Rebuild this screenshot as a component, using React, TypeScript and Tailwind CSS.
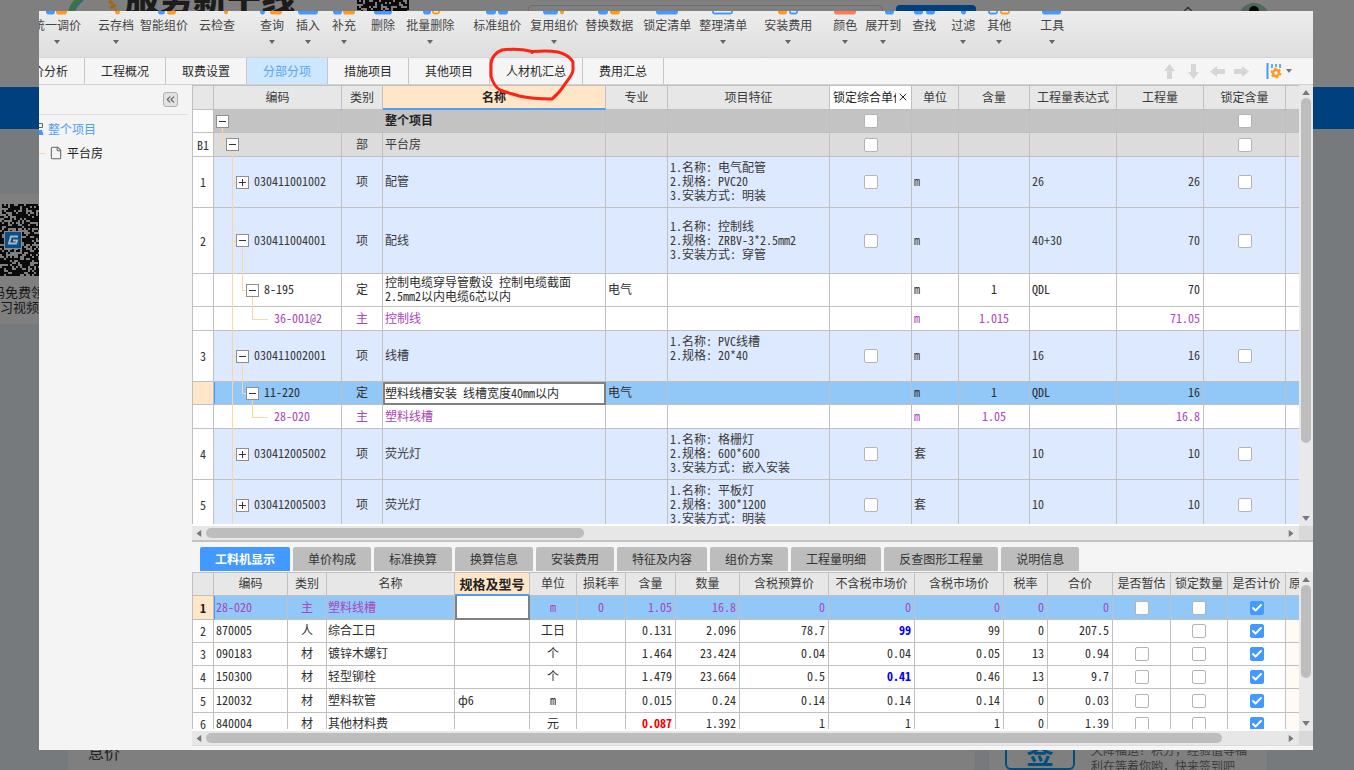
import React, { useState } from "react";
import { Check, ChevronUp, ChevronsLeft, File, X } from "lucide-react";

/* ---------- shared bits ---------- */

function Caret({ className = "" }: { className?: string }) {
  return (
    <svg className={className} width="6" height="4" viewBox="0 0 6 4" aria-hidden="true">
      <path d="M0 0h6L3 4z" fill="currentColor" />
    </svg>
  );
}

function Arrow({ className = "" }: { className?: string }) {
  return (
    <svg className={className} width="15" height="15" viewBox="0 0 15 15" aria-hidden="true">
      <path d="M7.500 0L13 7H10V15H5V7H2z" fill="currentColor" />
    </svg>
  );
}

function Tick({ label, on = false }: { label: string; on?: boolean }) {
  const [checked, setChecked] = useState(on);
  return (
    <span className="mx-auto grid h-3.5 w-3.5 place-items-center">
      <input
        type="checkbox"
        aria-label={label}
        checked={checked}
        onChange={(e) => setChecked(e.target.checked)}
        className="peer col-start-1 row-start-1 h-3.5 w-3.5 appearance-none rounded-[2px] border border-[#b4b4b4] bg-white checked:border-[#4299ff] checked:bg-[#4299ff]"
      />
      <Check
        size={12}
        strokeWidth={4}
        className="pointer-events-none invisible col-start-1 row-start-1 text-white peer-checked:visible"
      />
    </span>
  );
}

function VScroll({ thumb }: { thumb: string }) {
  return (
    <div className="flex w-3.5 shrink-0 flex-col items-center bg-[#e9e9e9] pt-[3px] pb-1">
      <button type="button" aria-label="向上滚动" className="flex h-2 items-center text-[#777780]">
        <Caret className="h-[5px] w-2 rotate-180" />
      </button>
      <div className="flex w-full flex-1 flex-col items-center pt-0.5">
        <div className={"w-2.5 rounded-full bg-[#bdbdbd] " + thumb} />
      </div>
      <button type="button" aria-label="向下滚动" className="flex h-2 items-center text-[#777780]">
        <Caret className="h-[5px] w-2" />
      </button>
    </div>
  );
}

function HScroll({ thumb }: { thumb: string }) {
  return (
    <div className="flex h-3.5 shrink-0">
      <div className="flex flex-1 items-center bg-[#e7e7e7] pr-0.5 pl-[3px]">
        <button type="button" aria-label="向左滚动" className="flex w-[11px] text-[#777780]">
          <Caret className="h-[5px] w-2 rotate-90" />
        </button>
        <div className="flex flex-1">
          <div className={"h-2.5 rounded-full bg-[#bdbdbd] " + thumb} />
        </div>
        <button type="button" aria-label="向右滚动" className="flex w-2.5 text-[#777780]">
          <Caret className="h-[5px] w-2 -rotate-90" />
        </button>
      </div>
      <div className="w-3.5 bg-[#d9d9d9]" />
    </div>
  );
}

/* ---------- toolbar ---------- */

const BLUE = "#4299ff";
const ORANGE = "#ff9a1f";

type Piece = { x: number; w: number; c: string; open?: boolean };
type Tool = { name: string; gap: string; menu?: boolean; icon: Piece[] };

const tools: Tool[] = [
  { name: "统一调价", gap: "-ml-1.5", menu: true, icon: [{ x: 4, w: 9, c: BLUE }, { x: 14, w: 11, c: ORANGE }] },
  { name: "云存档", gap: "ml-[17px]", menu: true, icon: [{ x: 14, w: 5, c: ORANGE }] },
  { name: "智能组价", gap: "ml-1.5", icon: [{ x: 9, w: 7, c: BLUE }, { x: 18, w: 9, c: ORANGE }] },
  { name: "云检查", gap: "ml-[11px]", icon: [{ x: 22, w: 4, c: ORANGE }] },
  { name: "查询", gap: "ml-[25px]", menu: true, icon: [{ x: 3, w: 5, c: BLUE }, { x: 13, w: 12, c: ORANGE }] },
  { name: "插入", gap: "ml-3", menu: true, icon: [{ x: 5, w: 20, c: BLUE }] },
  { name: "补充", gap: "ml-3", menu: true, icon: [{ x: 4, w: 9, c: BLUE }, { x: 14, w: 12, c: ORANGE }] },
  { name: "删除", gap: "ml-[15px]", icon: [{ x: 6, w: 18, c: BLUE }] },
  { name: "批量删除", gap: "ml-[11px]", menu: true, icon: [{ x: 8, w: 8, c: BLUE }, { x: 17, w: 8, c: ORANGE, open: true }] },
  { name: "标准组价", gap: "ml-[19px]", icon: [{ x: 4, w: 10, c: BLUE }, { x: 16, w: 10, c: BLUE }] },
  { name: "复用组价", gap: "ml-[9px]", menu: true, icon: [{ x: 4, w: 15, c: BLUE }, { x: 21, w: 4, c: ORANGE }] },
  { name: "替换数据", gap: "ml-[7px]", icon: [{ x: 4, w: 10, c: BLUE }, { x: 16, w: 10, c: ORANGE }] },
  { name: "锁定清单", gap: "ml-2.5", icon: [{ x: 4, w: 22, c: BLUE }] },
  { name: "整理清单", gap: "ml-2", menu: true, icon: [{ x: 4, w: 21, c: BLUE, open: true }] },
  { name: "安装费用", gap: "ml-[17px]", menu: true, icon: [{ x: 5, w: 9, c: ORANGE }, { x: 16, w: 9, c: BLUE, open: true }] },
  { name: "颜色", gap: "ml-[21px]", menu: true, icon: [{ x: 4, w: 22, c: "#ff7a50" }] },
  { name: "展开到", gap: "ml-2", menu: true, icon: [{ x: 17, w: 9, c: BLUE }] },
  { name: "查找", gap: "ml-[11px]", icon: [{ x: 5, w: 9, c: BLUE }, { x: 17, w: 9, c: BLUE }] },
  { name: "过滤", gap: "ml-[15px]", menu: true, icon: [{ x: 13, w: 5, c: BLUE }] },
  { name: "其他", gap: "ml-3", menu: true, icon: [{ x: 4, w: 10, c: BLUE, open: true }, { x: 16, w: 10, c: ORANGE, open: true }] },
  { name: "工具", gap: "ml-[29px]", menu: true, icon: [{ x: 5, w: 19, c: BLUE }] },
];

function Toolbar() {
  return (
    <div className="flex h-[46px] shrink-0 bg-linear-to-b from-[#ededed] to-[#dedede] text-[#454545]">
      {tools.map((t) => (
        <button key={t.name} type="button" className={"flex shrink-0 flex-col items-center whitespace-nowrap " + t.gap}>
          <svg width="30" height="4" viewBox="0 0 30 4" className="-mx-3" aria-hidden="true">
            {t.icon.map((p) =>
              p.open ? (
                <path key={p.x} d={`M${p.x + 1} 0v1q0 1.5 1.5 1.5h${p.w - 5}q1.5 0 1.5-1.5v-1`} fill="none" stroke={p.c} strokeWidth="1.8" />
              ) : (
                <path key={p.x} d={`M${p.x} 0h${p.w}q0 3.4-2 3.4h${-(p.w - 4)}q-2 0-2-3.4z`} fill={p.c} />
              )
            )}
          </svg>
          <span className="mt-0.5 h-4 text-xs leading-4">{t.name}</span>
          {t.menu && <Caret className="mt-[7px] text-[#666]" />}
        </button>
      ))}
    </div>
  );
}

/* ---------- page tabs ---------- */

const pageTabs = ["价分析", "工程概况", "取费设置", "分部分项", "措施项目", "其他项目", "人材机汇总", "费用汇总"];

function PageTabs() {
  return (
    <div className="flex h-7 shrink-0 border-y border-[#d3d3d3] bg-[#f5f5f5] text-xs">
      {pageTabs.map((t, i) => (
        <button
          key={t}
          type="button"
          className={
            "relative shrink-0 border-r border-[#c6c6c6] whitespace-nowrap " +
            (i === 0 ? "-ml-[7px] pr-4 pl-0 " : "px-4 ") +
            (t === "分部分项" ? "bg-[#cce7ff] text-[#5aa5f8]" : "text-[#2b2b2b]")
          }
        >
          {t}
          {t === "人材机汇总" && (
            <svg
              className="pointer-events-none absolute -top-3 -left-1 z-20"
              width="92"
              height="56"
              viewBox="0 0 92 56"
              fill="none"
              stroke="#ff2314"
              strokeWidth="3"
              strokeLinecap="round"
              strokeLinejoin="round"
              aria-hidden="true"
            >
              <path d="M46 5.500C36 3 24 3 16 4C10 6 5 12 5 18V30C6 34 8 40 14 44C21 47 28 48 33 50C42 52 48 53 66 53C72 48 76 43 79 38C84 31 87 28 87 24V16C84 11 80 8 72 6C62 4 52 5 46 5.500V6.500" />
            </svg>
          )}
        </button>
      ))}
      <div className="flex flex-1 items-center justify-end gap-[9px] pr-[21px] text-[#d6d6d6]">
        <button type="button" aria-label="上移"><Arrow /></button>
        <button type="button" aria-label="下移"><Arrow className="rotate-180" /></button>
        <button type="button" aria-label="左移"><Arrow className="-rotate-90" /></button>
        <button type="button" aria-label="右移"><Arrow className="rotate-90" /></button>
        <button type="button" aria-label="列设置" className="ml-2 flex items-center gap-1">
          <svg width="16" height="16" viewBox="0 0 16 16" aria-hidden="true">
            <path d="M1.500 0v16" stroke={BLUE} strokeWidth="2" />
            <path d="M6 1v4M10 1v3M14 1v4" stroke={BLUE} strokeWidth="1.6" />
            <circle cx="10" cy="10" r="3" fill="none" stroke={ORANGE} strokeWidth="2.4" />
            <circle cx="10" cy="10" r="4.6" fill="none" stroke={ORANGE} strokeWidth="1.6" strokeDasharray="2.4 2.4" />
          </svg>
          <Caret className="text-[#777]" />
        </button>
      </div>
    </div>
  );
}

/* ---------- bill of quantities ---------- */

type Level = 0 | 1 | 2 | 3 | 4;
type BillRow = {
  no: string;
  level: Level;
  sign?: "+" | "-";
  code?: string;
  kind?: string;
  name: string;
  major?: string;
  spec?: string;
  lock?: boolean;
  unit?: string;
  rate?: string;
  expr?: string;
  qty?: string;
  height: string;
  tone: string;
  active?: boolean;
};

const ITEM = "bg-[#dde9fe] text-[#3a3a3a]";
const PLAIN = "bg-white text-[#2e2e2e]";
const MAT = "bg-white text-[#a946bb]";

const bill: BillRow[] = [
  { no: "", level: 0, sign: "-", name: "整个项目", lock: true, height: "h-[23px]", tone: "bg-[#c3c3c3] font-bold text-[#222]" },
  { no: "B1", level: 1, sign: "-", kind: "部", name: "平台房", lock: true, height: "h-6", tone: "bg-[#dcdcdc] text-[#3a3a3a]" },
  { no: "1", level: 2, sign: "+", code: "030411001002", kind: "项", name: "配管", spec: "1.名称: 电气配管\n2.规格: PVC20\n3.安装方式: 明装", lock: true, unit: "m", expr: "26", qty: "26", height: "h-[51px]", tone: ITEM },
  { no: "2", level: 2, sign: "-", code: "030411004001", kind: "项", name: "配线", spec: "1.名称: 控制线\n2.规格: ZRBV-3*2.5mm2\n3.安装方式: 穿管", lock: true, unit: "m", expr: "40+30", qty: "70", height: "h-[66px]", tone: ITEM },
  { no: "", level: 3, sign: "-", code: "8-195", kind: "定", name: "控制电缆穿导管敷设 控制电缆截面\n2.5mm2以内电缆6芯以内", major: "电气", unit: "m", rate: "1", expr: "QDL", qty: "70", height: "h-[33px]", tone: PLAIN },
  { no: "", level: 4, code: "36-001@2", kind: "主", name: "控制线", unit: "m", rate: "1.015", qty: "71.05", height: "h-6", tone: MAT },
  { no: "3", level: 2, sign: "-", code: "030411002001", kind: "项", name: "线槽", spec: "1.名称: PVC线槽\n2.规格: 20*40\n\n", lock: true, unit: "m", expr: "16", qty: "16", height: "h-[51px]", tone: ITEM },
  { no: "", level: 3, sign: "-", code: "11-220", kind: "定", name: "塑料线槽安装 线槽宽度40mm以内", major: "电气", unit: "m", rate: "1", expr: "QDL", qty: "16", height: "h-[23px]", tone: "bg-[#92c8f8] text-[#2e2e2e]", active: true },
  { no: "", level: 4, code: "28-020", kind: "主", name: "塑料线槽", unit: "m", rate: "1.05", qty: "16.8", height: "h-6", tone: MAT },
  { no: "4", level: 2, sign: "+", code: "030412005002", kind: "项", name: "荧光灯", spec: "1.名称: 格栅灯\n2.规格: 600*600\n3.安装方式: 嵌入安装", lock: true, unit: "套", expr: "10", qty: "10", height: "h-[51px]", tone: ITEM },
  { no: "5", level: 2, sign: "+", code: "030412005003", kind: "项", name: "荧光灯", spec: "1.名称: 平板灯\n2.规格: 300*1200\n3.安装方式: 明装", lock: true, unit: "套", expr: "10", qty: "10", height: "h-[51px]", tone: ITEM },
];

const indent = ["pl-0.5", "pl-3", "pl-[22px]", "pl-8", "pl-[60px]"];
const above = ["", "left-2", "left-[18px]", "left-7", "left-[38px]"];
const below = ["left-2", "left-[18px]", "left-7", "left-[38px]", ""];
const guide = "absolute bg-[#fbd6a4]";

const line = "border-r border-b border-[#c0c0c0]";
const cell = line + " pb-0.5";
const headTone = "border-[#c0c0c0] bg-[#e7e7e7] pb-0.5 font-normal text-[#3a3a3a] whitespace-nowrap overflow-hidden";
const head = "border-t border-r border-b " + headTone;
const headActive = "border-t border-r border-b-2 border-[#c0c0c0] border-b-[#4f9ef5] bg-[#ffe6c8] font-bold text-[#222] whitespace-nowrap";

function TreeCell({ row }: { row: BillRow }) {
  const l = row.level;
  return (
    <td className={line + " relative " + indent[l]}>
      {l >= 2 && <span className={guide + " top-0 -bottom-px left-[18px] w-px"} />}
      {l === 1 && <span className={guide + " top-0 left-2 h-1/2 w-px"} />}
      {l === 3 && <span className={guide + " top-0 left-7 h-1/2 w-px"} />}
      {l === 4 && <span className={guide + " top-0 left-[38px] h-1/2 w-px"} />}
      {l > 0 && <span className={guide + " top-1/2 h-px " + above[l] + (l === 4 ? " w-4" : " w-1.5")} />}
      {(l < 2 || (row.sign === "-" && l < 4)) && (
        <span className={guide + " top-1/2 -bottom-px w-px " + below[l]} />
      )}
      {row.active && <span className="absolute inset-y-0 left-0 w-px bg-[#4299ff]" />}
      <span className="relative flex items-center gap-[5px]">
        {row.sign && (
          <button
            type="button"
            aria-label={row.sign === "+" ? "展开" : "折叠"}
            className="grid h-[13px] w-[13px] shrink-0 place-items-center border border-[#8e8e8e] bg-white"
          >
            <svg width="7" height="7" viewBox="0 0 7 7" aria-hidden="true">
              <path d={row.sign === "+" ? "M0 3.5h7M3.5 0v7" : "M0 3.5h7"} stroke="#333" strokeWidth="1" />
            </svg>
          </button>
        )}
        <span className="pb-0.5">{row.code}</span>
      </span>
    </td>
  );
}

function BillTable() {
  return (
    <table className="w-full table-fixed border-separate border-spacing-0 border-l border-[#c0c0c0] text-xs leading-[14px]">
      <colgroup>
        <col className="w-[21px]" />
        <col className="w-[128px]" />
        <col className="w-[41px]" />
        <col className="w-[223px]" />
        <col className="w-[62px]" />
        <col className="w-[162px]" />
        <col className="w-[82px]" />
        <col className="w-[47px]" />
        <col className="w-[71px]" />
        <col className="w-[87px]" />
        <col className="w-[87px]" />
        <col className="w-[82px]" />
        <col />
      </colgroup>
      <thead>
        <tr className="h-[25px]">
          <th className={head} />
          <th className={head}>编码</th>
          <th className={head}>类别</th>
          <th className={headActive}>名称</th>
          <th className={head}>专业</th>
          <th className={head}>项目特征</th>
          <th className="border-t border-r border-b border-[#c0c0c0] bg-white pr-0.5 pb-0.5 pl-[3px] font-normal text-[#222]">
            <span className="flex items-center justify-between">
              <span className="w-[63px] overflow-hidden text-left whitespace-nowrap">锁定综合单价</span>
              <button type="button" aria-label="关闭"><X size={12} strokeWidth={2} /></button>
            </span>
          </th>
          <th className={head}>单位</th>
          <th className={head}>含量</th>
          <th className={head}>工程量表达式</th>
          <th className={head}>工程量</th>
          <th className={head}>锁定含量</th>
          <th className={"border-t border-b " + headTone} />
        </tr>
      </thead>
      <tbody>
        {bill.map((r, i) => (
          <tr key={i} className={r.height + " " + r.tone}>
            <td className={line + " text-center font-normal " + (r.active ? "bg-[#ffe6c8]" : "bg-white text-[#333]")}>{r.no}</td>
            <TreeCell row={r} />
            <td className={cell + " text-center"}>{r.kind}</td>
            {r.active ? (
              <td className="border-2 border-[#808080] bg-white p-0">
                <input aria-label="名称" defaultValue={r.name} className="block w-full bg-transparent pb-0.5 leading-[14px] outline-none" />
              </td>
            ) : (
              <td className={cell + " pl-0.5 whitespace-pre-line"}>{r.name}</td>
            )}
            <td className={cell + " pl-0.5"}>{r.major}</td>
            <td className={cell + " pl-0.5 whitespace-pre-wrap"}>{r.spec}</td>
            <td className={line}>{r.lock && <Tick label="锁定综合单价" />}</td>
            <td className={cell + " pl-0.5"}>{r.unit}</td>
            <td className={cell + " text-center"}>{r.rate}</td>
            <td className={cell + " pl-0.5"}>{r.expr}</td>
            <td className={cell + " pr-[3px] text-right"}>{r.qty}</td>
            <td className={line}>{r.lock && <Tick label="锁定含量" />}</td>
            <td className="border-b border-[#c0c0c0]" />
          </tr>
        ))}
      </tbody>
    </table>
  );
}

/* ---------- resources ---------- */

type Res = {
  code: string;
  kind: string;
  name: string;
  spec?: string;
  unit: string;
  loss?: string;
  nums: string[];
  blue?: boolean;
  red?: boolean;
  noEst?: boolean;
  height: string;
};

const resources: Res[] = [
  { code: "28-020", kind: "主", name: "塑料线槽", unit: "m", loss: "0", nums: ["1.05", "16.8", "0", "0", "0", "0", "0"], height: "h-6" },
  { code: "870005", kind: "人", name: "综合工日", unit: "工日", nums: ["0.131", "2.096", "78.7", "99", "99", "0", "207.5"], blue: true, noEst: true, height: "h-[23px]" },
  { code: "090183", kind: "材", name: "镀锌木螺钉", unit: "个", nums: ["1.464", "23.424", "0.04", "0.04", "0.05", "13", "0.94"], height: "h-[23px]" },
  { code: "150300", kind: "材", name: "轻型铆栓", unit: "个", nums: ["1.479", "23.664", "0.5", "0.41", "0.46", "13", "9.7"], blue: true, height: "h-[23px]" },
  { code: "120032", kind: "材", name: "塑料软管", spec: "ф6", unit: "m", nums: ["0.015", "0.24", "0.14", "0.14", "0.14", "0", "0.03"], height: "h-6" },
  { code: "840004", kind: "材", name: "其他材料费", unit: "元", nums: ["0.087", "1.392", "1", "1", "1", "0", "1.39"], red: true, height: "h-[23px]" },
];

const resHead = ["", "编码", "类别", "名称", "规格及型号", "单位", "损耗率", "含量", "数量", "含税预算价", "不含税市场价", "含税市场价", "税率", "合价", "是否暂估", "锁定数量", "是否计价"];

function ResourceTable() {
  return (
    <table className="w-full table-fixed border-separate border-spacing-0 border-l border-[#c0c0c0] text-xs leading-[14px]">
      <colgroup>
        <col className="w-[21px]" />
        <col className="w-[74px]" />
        <col className="w-[39px]" />
        <col className="w-[128px]" />
        <col className="w-[75px]" />
        <col className="w-[47px]" />
        <col className="w-[49px]" />
        <col className="w-[50px]" />
        <col className="w-[64px]" />
        <col className="w-[89px]" />
        <col className="w-[86px]" />
        <col className="w-[89px]" />
        <col className="w-[44px]" />
        <col className="w-[65px]" />
        <col className="w-[58px]" />
        <col className="w-[57px]" />
        <col className="w-[58px]" />
        <col />
      </colgroup>
      <thead>
        <tr className="h-6">
          {resHead.map((h) => (
            <th key={h} className={h === "规格及型号" ? headActive + " text-[13px]" : head}>{h}</th>
          ))}
          <th className={"border-t border-b pl-[3px] text-left " + headTone}>原</th>
        </tr>
      </thead>
      <tbody>
        {resources.map((r, i) => (
          <tr key={r.code} className={r.height + (i === 0 ? " bg-[#92c8f8] text-[#a946bb]" : " bg-white text-[#2e2e2e]")}>
            <td className={line + " text-center " + (i === 0 ? "bg-[#ffe6c8] font-bold text-[#222]" : "text-[#333]")}>{i + 1}</td>
            <td className={cell + (i === 0 ? " border-l border-l-[#4299ff] pl-px" : " pl-0.5")}>{r.code}</td>
            <td className={cell + " text-center"}>{r.kind}</td>
            <td className={cell + " pl-px"}>{r.name}</td>
            {i === 0 ? (
              <td className="border-2 border-t-0 border-[#808080] bg-white p-0">
                <input aria-label="规格及型号" className="block w-full bg-transparent leading-[14px] outline-none" />
              </td>
            ) : (
              <td className={cell + " pl-[3px]"}>{r.spec}</td>
            )}
            <td className={cell + " text-center"}>{r.unit}</td>
            <td className={cell + " text-center"}>{r.loss}</td>
            {r.nums.map((n, k) => (
              <td
                key={k}
                className={
                  cell +
                  " pr-[3px] text-right" +
                  (r.blue && k === 3 ? " font-bold text-[#0000f5]" : "") +
                  (r.red && k === 0 ? " font-bold text-[#f50000]" : "")
                }
              >
                {n}
              </td>
            ))}
            <td className={line}>{!r.noEst && <Tick label="是否暂估" />}</td>
            <td className={line}><Tick label="锁定数量" /></td>
            <td className={line}><Tick label="是否计价" on /></td>
            <td className={"border-b border-[#c0c0c0]" + (i === 0 ? "" : " bg-[#fffaf3]")} />
          </tr>
        ))}
      </tbody>
    </table>
  );
}

const detailTabs = ["工料机显示", "单价构成", "标准换算", "换算信息", "安装费用", "特征及内容", "组价方案", "工程量明细", "反查图形工程量", "说明信息"];

/* ---------- estimate window ---------- */

function EstimateWindow() {
  return (
    <div className="flex h-full flex-col overflow-hidden bg-[#f5f5f5] font-['Noto_Sans_CJK_SC',sans-serif] [font-feature-settings:'hwid']">
      <Toolbar />
      <PageTabs />
      <div className="flex min-h-0 flex-1">
        <aside className="w-[153px] shrink-0 bg-[#f4f4f4] text-xs">
          <div className="mr-1 flex h-[30px] items-center justify-end border-b border-[#dedede] pr-2.5">
            <button type="button" aria-label="收起" className="grid h-[15px] w-[15px] place-items-center rounded-[3px] border border-[#b0b0b0] bg-[#e2e2e2] text-[#666]">
              <ChevronsLeft size={13} strokeWidth={2} />
            </button>
          </div>
          <ul className="pt-0.5">
            <li className="flex h-6 items-center gap-1 text-[#4f9ef5]">
              <svg width="5" height="14" viewBox="0 0 5 14" aria-hidden="true">
                <path d="M0 1.500h3.500v4H0" fill="none" stroke="#666" />
                <path d="M0 8h3l1.500 5H0z" fill={BLUE} />
              </svg>
              <a href="#project">整个项目</a>
            </li>
            <li className="flex h-6 items-center text-[#222]">
              <span className="h-px w-[7px] bg-[#fbd6a4]" />
              <File size={14} strokeWidth={1.8} className="ml-[3px] text-[#666]" />
              <a href="#building" className="ml-1">平台房</a>
            </li>
          </ul>
        </aside>

        <main className="flex min-w-0 flex-1 flex-col">
          <section className="flex min-h-0 flex-1 flex-col">
            <div className="flex min-h-0 flex-1">
              <div className="min-w-0 flex-1 overflow-hidden border-b-2 border-white">
                <BillTable />
              </div>
              <VScroll thumb="h-[345px]" />
            </div>
            <HScroll thumb="w-[35%]" />
          </section>

          <section className="shrink-0 border-t-2 border-[#c2c2c2] pt-[5px]">
            <div className="flex h-[25px] gap-[3px] pb-px pl-2 text-xs">
              {detailTabs.map((t, i) => (
                <button
                  key={t}
                  type="button"
                  className={
                    "rounded-t-[2px] px-[15px] whitespace-nowrap " +
                    (i === 0 ? "bg-[#4299ff] font-bold text-white" : "bg-[#bdbdbd] text-[#333]")
                  }
                >
                  {t}
                </button>
              ))}
            </div>
            <div className="flex h-[159px]">
              <div className="min-w-0 flex-1 overflow-hidden border-b-2 border-white">
                <ResourceTable />
              </div>
              <VScroll thumb="h-[93px]" />
            </div>
            <HScroll thumb="w-[94%]" />
            <div className="h-[5px] border-t border-[#dcdcdc]" />
          </section>
        </main>
      </div>
    </div>
  );
}

/* ---------- dimmed site behind the window ---------- */

function Code({ cols, rows, className = "" }: { cols: number; rows: number; className?: string }) {
  const dots: string[] = [];
  for (let y = 0; y < rows; y++) {
    for (let x = 0; x < cols; x++) {
      const n = Math.sin(x * 12.9898 + y * 78.233) * 43758.5453;
      if (n - Math.floor(n) > 0.4) dots.push(`M${x} ${y}h1v1h-1z`);
    }
  }
  return (
    <svg className={className} viewBox={`0 0 ${cols} ${rows}`} width={cols * 2} height={rows * 2} shapeRendering="crispEdges" aria-hidden="true">
      <path d={dots.join("")} fill="#0a0a0a" />
    </svg>
  );
}

function Site() {
  return (
    <div className="flex h-screen flex-col overflow-hidden bg-[#767a7d] font-['Noto_Sans_CJK_SC',sans-serif]">
      <header className="relative flex h-[87px] shrink-0 items-start bg-[#7f7f7f]">
        <svg className="ml-[66px]" width="54" height="12" viewBox="0 0 54 12" aria-hidden="true">
          <path d="M14-1Q7 4 5 12" stroke="#3c7443" strokeWidth="6" fill="none" />
          <path d="M17 0Q10 5 8 12" stroke="#2e6c7c" strokeWidth="2" fill="none" />
          <path d="M43 1l4 3M44 8l6-3M49 10l1-1" stroke="#a5640e" strokeWidth="3" />
        </svg>
        <span className="-mt-[22px] ml-[5px] text-[34px] leading-[38px] font-black text-[#1c1c1c]">服务新干线</span>
        <Code cols={27} rows={6} className="ml-[60px]" />
        <div className="mt-[5px] ml-[119px] h-9 w-[355px] rounded-sm border border-[#6c6c6c]" />
        <div className="mt-[5px] ml-[13px] h-9 w-20 rounded-sm bg-[#00407f]" />
        <ChevronUp size={14} className="mt-0.5 ml-[205px] text-[#333]" />
        <svg className="mt-[3px] ml-[43px]" width="32" height="32" viewBox="0 0 32 32" aria-hidden="true">
          <circle cx="16" cy="16" r="16" fill="#50695c" />
          <circle cx="16" cy="8" r="5" fill="#050505" />
        </svg>
      </header>
      <nav className="h-[42px] shrink-0 bg-[#00407f]" />
      <div className="flex min-h-0 flex-1">
        <aside className="w-[68px] shrink-0 overflow-hidden pt-[65px]">
          <div className="h-[130px] bg-[#7f7f7f] pt-2.5">
            <div className="relative h-[72px]">
              <Code cols={30} rows={36} />
              <svg className="absolute top-[27px] left-1" width="18" height="18" viewBox="0 0 18 18" aria-hidden="true">
                <rect x="0.500" y="0.500" width="17" height="17" fill="#074f86" stroke="#8a8a8a" />
                <path d="M14 5.500H7L5 12.500h7L13 9.500H9" fill="none" stroke="#a9b4bd" strokeWidth="2" />
              </svg>
            </div>
            <p className="mt-2 -ml-2 text-[13px] leading-[15px] whitespace-nowrap text-[#161616]">
              码免费领
              <br />
              <span className="-ml-[5px]">学习视频</span>
            </p>
          </div>
        </aside>
        <div className="flex flex-1 flex-col justify-end bg-[#7f7f7f] pb-1.5 pl-5">
          <span className="text-base text-[#222]">息价</span>
        </div>
        <div className="ml-3.5 flex w-[278px] items-end gap-4 bg-[#7f7f7f] pl-4">
          <div className="flex h-[50px] w-[70px] items-end justify-center rounded-md border-2 border-[#004f7d] text-[28px] leading-8 font-bold text-[#004f7d]">签</div>
          <p className="-mb-1 text-xs leading-4 whitespace-nowrap text-[#3c3c3c]">
            天降福运！积分，经验值等福
            <br />
            利在等着你哟，快来签到吧
          </p>
        </div>
        <div className="w-[87px] shrink-0" />
      </div>
    </div>
  );
}

export default function App() {
  return (
    <>
      <Site />
      <div className="fixed inset-0 pt-[11px] pr-[41px] pb-5 pl-[39px]">
        <EstimateWindow />
      </div>
    </>
  );
}
